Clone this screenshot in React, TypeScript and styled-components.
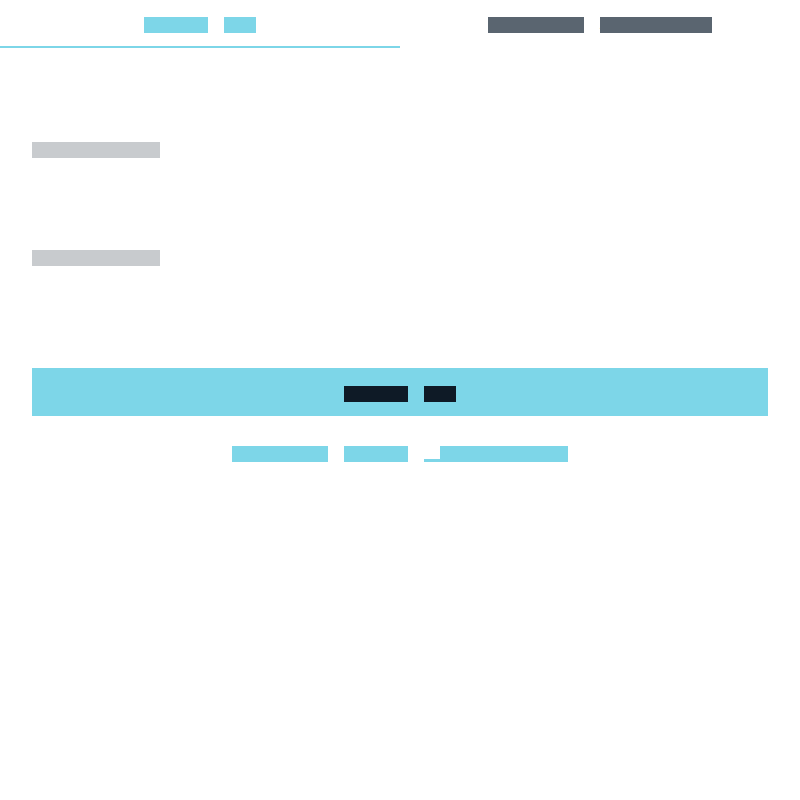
import React from "react";
import styled, { createGlobalStyle } from "styled-components";

const CYAN = "#7dd6e8";
const SLATE = "#5a6570";
const MUTED = "#c8cbce";
const INK = "#0e1a26";

const Global = createGlobalStyle`
  html, body { margin: 0; padding: 0; background: #ffffff; }
  body { font-family: "Liberation Mono", "DejaVu Sans Mono", monospace; }
  * { box-sizing: border-box; }
`;

const Page = styled.div`
  width: 800px;
  min-height: 800px;
  background: #ffffff;
`;

const Tabs = styled.nav`
  display: grid;
  grid-template-columns: 1fr 1fr;
`;

const Tab = styled.button<{ $active?: boolean }>`
  appearance: none;
  border: 0;
  background: transparent;
  margin: 0;
  padding: 17px 0 ${(p) => (p.$active ? 13 : 15)}px;
  border-bottom: ${(p) => (p.$active ? `2px solid ${CYAN}` : "0")};
  display: flex;
  justify-content: center;
  cursor: pointer;
`;

const Phrase = styled.span`
  display: inline-flex;
  align-items: center;
  gap: 16px;
  height: 16px;
`;

const Word = styled.span<{ $c: string }>`
  display: inline-block;
  height: 16px;
  font-family: "Liberation Mono", monospace;
  font-size: 16px;
  line-height: 16px;
  letter-spacing: 6.4px;
  white-space: pre;
  color: ${(p) => p.$c};
  background: ${(p) => p.$c};
`;

const Form = styled.form`
  padding: 94px 32px 0;
  display: flex;
  flex-direction: column;
`;

const Field = styled.label`
  display: flex;
  flex-direction: column;
  margin-bottom: 24px;
`;

const Input = styled.input`
  margin-top: 8px;
  height: 60px;
  border: 0;
  background: transparent;
  outline: none;
  font-size: 16px;
`;

const Submit = styled.button`
  appearance: none;
  border: 0;
  margin: 10px 0 0;
  background: ${CYAN};
  height: 48px;
  padding: 18px 0 14px;
  display: flex;
  justify-content: center;
  align-items: flex-start;
  cursor: pointer;
`;

const Footer = styled.div`
  margin-top: 30px;
  display: flex;
  justify-content: center;
`;

const Link = styled.a`
  display: inline-flex;
  padding-left: 16px;
  height: 16px;
  background: linear-gradient(${CYAN}, ${CYAN}) left bottom / 16px 3px no-repeat;
  text-decoration: none;
  cursor: pointer;
`;

const Words: React.FC<{ text: string; c: string }> = ({ text, c }) => (
  <Phrase>
    {text.split(" ").map((w, i) => (
      <Word key={i} $c={c}>
        {w}
      </Word>
    ))}
  </Phrase>
);

export default function App() {
  return (
    <Page>
      <Global />
      <Tabs>
        <Tab $active>
          <Words text="Sign In" c={CYAN} />
        </Tab>
        <Tab>
          <Words text="Create Account" c={SLATE} />
        </Tab>
      </Tabs>
      <Form onSubmit={(e) => e.preventDefault()}>
        <Field>
          <Words text="Username" c={MUTED} />
          <Input type="text" aria-label="Username" />
        </Field>
        <Field>
          <Words text="Password" c={MUTED} />
          <Input type="password" aria-label="Password" />
        </Field>
        <Submit type="submit">
          <Words text="Sign In" c={INK} />
        </Submit>
        <Footer>
          <Phrase>
            <Word $c={CYAN}>Forgot</Word>
            <Word $c={CYAN}>your</Word>
            <Link href="#">
              <Word $c={CYAN}>password</Word>
            </Link>
          </Phrase>
        </Footer>
      </Form>
    </Page>
  );
}
